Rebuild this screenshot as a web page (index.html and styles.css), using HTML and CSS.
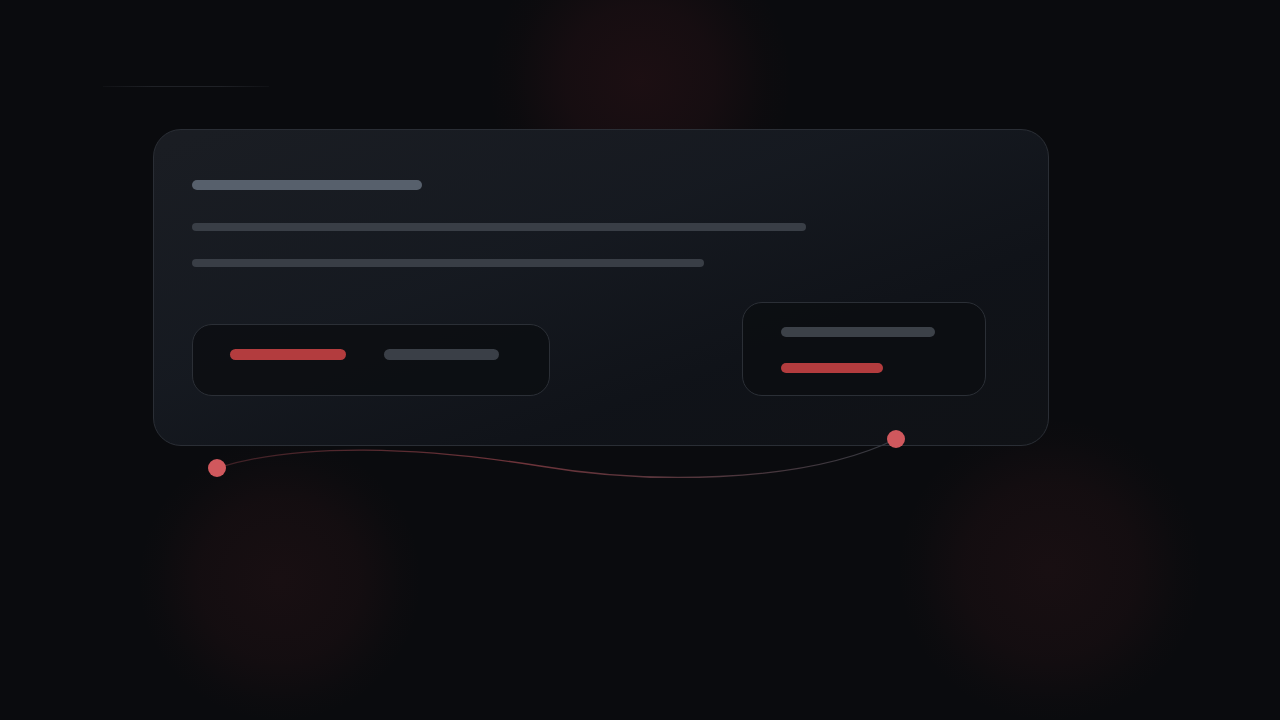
FILE: index.html
```html
<!DOCTYPE html>
<html lang="en">
<head>
<meta charset="utf-8">
<title>Card</title>
<link rel="stylesheet" href="styles.css">
</head>
<body>
<div class="stage">
  <div class="glow glow-top"></div>
  <div class="glow glow-left"></div>
  <div class="glow glow-right"></div>
  <div class="hairline"></div>
  <div class="card">
    <div class="bar title"></div>
    <div class="bar line line1"></div>
    <div class="bar line line2"></div>
    <div class="row">
      <div class="box box-left">
        <div class="bar red w116"></div>
        <div class="bar grey w115"></div>
      </div>
      <div class="box box-right">
        <div class="bar grey2 w154"></div>
        <div class="bar red w102"></div>
      </div>
    </div>
  </div>
  <svg class="connector" width="1280" height="720" viewBox="0 0 1280 720">
    <defs>
      <linearGradient id="lg" x1="217" y1="0" x2="896" y2="0" gradientUnits="userSpaceOnUse">
        <stop offset="0" stop-color="#3e2025"/>
        <stop offset="0.45" stop-color="#6e343a"/>
        <stop offset="1" stop-color="#33383f"/>
      </linearGradient>
    </defs>
    <path d="M217,468 C300,442 420,447 540,466 C640,483 800,486 896,439" fill="none" stroke="url(#lg)" stroke-width="1.3"/>
    <circle cx="217" cy="468" r="9" fill="#d0585d"/>
    <circle cx="896" cy="439" r="9" fill="#d0585d"/>
  </svg>
</div>
</body>
</html>
```
FILE: styles.css
```css
html, body {
  margin: 0;
  padding: 0;
  background: #0a0b0e;
  font-family: "Inter", "Liberation Sans", sans-serif;
}
.stage {
  position: relative;
  width: 1280px;
  height: 720px;
  overflow: hidden;
  padding: 129px 0 0 153px;
  box-sizing: border-box;
  background: #0a0b0e;
}
.glow {
  position: absolute;
  border-radius: 50%;
  pointer-events: none;
}
.glow-top {
  left: 490px; top: -70px; width: 300px; height: 300px;
  background: radial-gradient(circle at center, rgba(34,16,20,0.75) 0%, rgba(30,15,19,0.6) 35%, rgba(20,12,15,0.25) 60%, rgba(10,11,14,0) 72%);
}
.glow-left {
  left: 140px; top: 440px; width: 280px; height: 280px;
  background: radial-gradient(circle at center, rgba(28,16,19,0.8) 0%, rgba(26,15,18,0.6) 40%, rgba(18,13,16,0.25) 62%, rgba(10,11,14,0) 72%);
}
.glow-right {
  left: 900px; top: 420px; width: 300px; height: 300px;
  background: radial-gradient(circle at center, rgba(28,16,19,0.8) 0%, rgba(26,15,18,0.6) 40%, rgba(18,13,16,0.25) 62%, rgba(10,11,14,0) 72%);
}
.hairline {
  position: absolute;
  left: 103px; top: 86px;
  width: 166px; height: 1px;
  background: linear-gradient(90deg, rgba(40,42,48,0.2), #1f2126 30%, #1f2126 70%, rgba(40,42,48,0.2));
}
.card {
  position: relative;
  width: 896px;
  height: 317px;
  box-sizing: border-box;
  border: 1px solid #2a2e35;
  border-radius: 28px;
  padding: 50px 62px 49px 38px;
  background: linear-gradient(160deg, rgba(27,30,36,0.96) 0%, rgba(22,26,33,0.96) 40%, rgba(16,19,25,0.96) 70%, rgba(16,18,22,0.96) 100%);
  display: flex;
  flex-direction: column;
}
.bar {
  border-radius: 6px;
  flex: none;
}
.title {
  width: 230px; height: 10px;
  background: #57606c;
}
.line {
  height: 8px;
  background: #393e46;
}
.line1 { width: 614px; margin-top: 33px; }
.line2 { width: 512px; margin-top: 28px; }
.row {
  margin-top: auto;
  display: flex;
  justify-content: space-between;
  align-items: flex-end;
}
.box {
  box-sizing: border-box;
  border: 1px solid #2b2f36;
  background: rgba(12,14,18,0.85);
  display: flex;
}
.box-left {
  width: 358px; height: 72px;
  border-radius: 20px;
  padding: 24px 0 0 37px;
  gap: 38px;
  align-items: flex-start;
}
.box-right {
  width: 244px; height: 94px;
  border-radius: 20px;
  padding: 24px 0 0 38px;
  flex-direction: column;
  gap: 26px;
}
.red { background: #b33c3e; height: 11px; }
.grey { background: #3a3f47; height: 11px; }
.grey2 { background: #3c4148; height: 10px; }
.box-right .red { height: 10px; }
.w116 { width: 116px; }
.w115 { width: 115px; }
.w154 { width: 154px; }
.w102 { width: 102px; }
.connector {
  position: absolute;
  left: 0; top: 0;
  pointer-events: none;
}
```
